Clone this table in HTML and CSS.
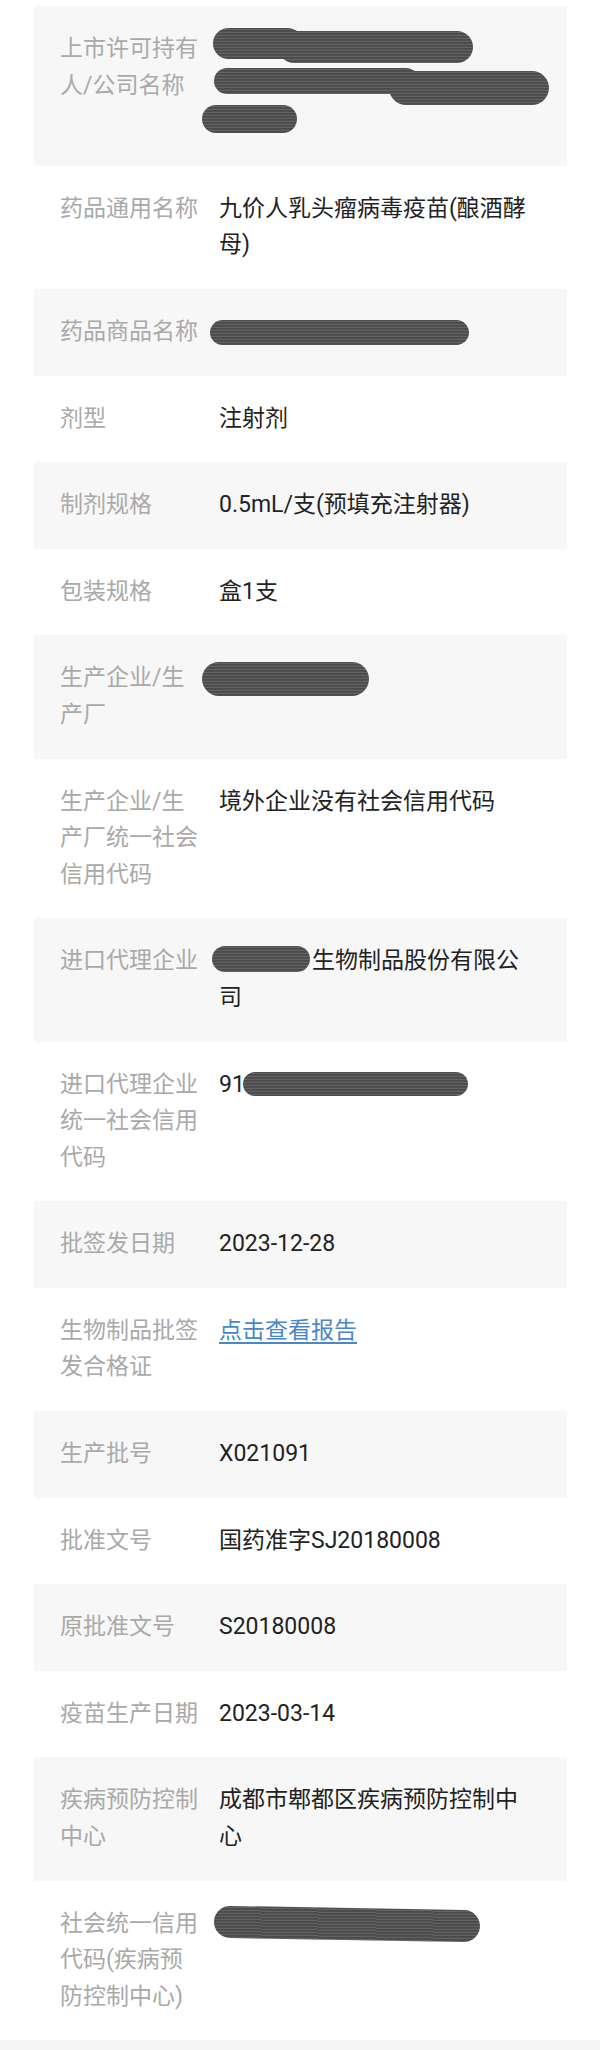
FILE: index.html
```html
<!DOCTYPE html>
<html lang="zh-CN">
<head>
<meta charset="utf-8">
<title>疫苗信息</title>
<link rel="stylesheet" href="styles.css">
</head>
<body>
<div class="list">
  <div class="row alt">
    <div class="label">上市许可持有人/公司名称</div>
    <div class="value stack3">
      <div class="scrawl s1"><span class="blob b1a"></span><span class="blob b1b"></span></div>
      <div class="scrawl s2"><span class="blob b2a"></span><span class="blob b2b"></span></div>
      <div class="scrawl s3"><span class="blob b3"></span></div>
    </div>
  </div>
  <div class="row">
    <div class="label">药品通用名称</div>
    <div class="value">九价人乳头瘤病毒疫苗(酿酒酵母)</div>
  </div>
  <div class="row alt">
    <div class="label">药品商品名称</div>
    <div class="value blob-line"><span class="blob r3"></span></div>
  </div>
  <div class="row">
    <div class="label">剂型</div>
    <div class="value">注射剂</div>
  </div>
  <div class="row alt">
    <div class="label">制剂规格</div>
    <div class="value">0.5mL/支(预填充注射器)</div>
  </div>
  <div class="row">
    <div class="label">包装规格</div>
    <div class="value">盒1支</div>
  </div>
  <div class="row alt">
    <div class="label">生产企业/生产厂</div>
    <div class="value blob-line"><span class="blob r7"></span></div>
  </div>
  <div class="row">
    <div class="label">生产企业/生产厂统一社会信用代码</div>
    <div class="value">境外企业没有社会信用代码</div>
  </div>
  <div class="row alt">
    <div class="label">进口代理企业</div>
    <div class="value"><span class="blob inline r9"></span>生物制品股份有限公司</div>
  </div>
  <div class="row">
    <div class="label">进口代理企业统一社会信用代码</div>
    <div class="value">91<span class="blob inline r10"></span></div>
  </div>
  <div class="row alt">
    <div class="label">批签发日期</div>
    <div class="value">2023-12-28</div>
  </div>
  <div class="row">
    <div class="label">生物制品批签发合格证</div>
    <div class="value"><a class="link" href="#">点击查看报告</a></div>
  </div>
  <div class="row alt">
    <div class="label">生产批号</div>
    <div class="value">X021091</div>
  </div>
  <div class="row">
    <div class="label">批准文号</div>
    <div class="value">国药准字SJ20180008</div>
  </div>
  <div class="row alt">
    <div class="label">原批准文号</div>
    <div class="value">S20180008</div>
  </div>
  <div class="row">
    <div class="label">疫苗生产日期</div>
    <div class="value">2023-03-14</div>
  </div>
  <div class="row alt">
    <div class="label">疾病预防控制中心</div>
    <div class="value">成都市郫都区疾病预防控制中心</div>
  </div>
  <div class="row">
    <div class="label">社会统一信用代码(疾病预防控制中心)</div>
    <div class="value blob-line"><span class="blob r18"></span></div>
  </div>
</div>
<div class="bottom-strip"></div>
</body>
</html>
```

FILE: styles.css
```css
:root {
  --lh: 36.6px;
}

html, body {
  margin: 0;
  padding: 0;
  background: #ffffff;
}

body {
  font-family: Roboto, "Noto Sans CJK SC", sans-serif;
  font-size: 23px;
  line-height: var(--lh);
  color: #222222;
}

.list {
  padding-top: 6px;
}

.row {
  display: grid;
  grid-template-columns: 142px 1fr;
  column-gap: 17px;
  margin: 0 33px 0 34px;
  padding: 25px 33px 25px 26px;
}

.row.alt {
  background: #f7f7f7;
}

.label {
  color: #a9a9a9;
}

.value {
  color: #222222;
}

.link {
  color: #4a87c7;
  text-decoration: underline;
  text-underline-offset: 4px;
  text-decoration-thickness: 1.5px;
}

/* redaction scribbles */
.blob {
  display: block;
  border-radius: 999px;
  background:
    repeating-linear-gradient(180deg, #4f4f4f 0 1px, #636363 1px 2px, #4a4a4a 2px 3px);
}

.blob.inline {
  display: inline-block;
}

.blob-line {
  display: flex;
  align-items: center;
  height: var(--lh);
}

.stack3 {
  height: calc(var(--lh) * 3);
}

.scrawl {
  display: flex;
  align-items: flex-start;
}

.s1 { margin-top: -3px; margin-left: -6px; }
.b1a { width: 90px; height: 31px; }
.b1b { width: 195px; height: 32px; margin-left: -25px; margin-top: 3px; }

.s2 { margin-top: 5px; margin-left: -5px; }
.b2a { width: 205px; height: 26px; }
.b2b { width: 160px; height: 34px; margin-left: -30px; margin-top: 3px; }

.s3 { margin-left: -17px; }
.b3 { width: 95px; height: 28px; }

.r3 { width: 259px; height: 25px; margin-left: -9px; }
.r7 { width: 167px; height: 34px; margin-left: -17px; }
.r9 { width: 98px; height: 26px; margin-left: -7px; margin-right: 2px; vertical-align: -4px; }
.r10 { width: 225px; height: 24px; margin-left: -2px; vertical-align: -4px; }
.r18 { width: 266px; height: 32px; margin-left: -5px; transform: rotate(1deg); }

.bottom-strip {
  height: 12px;
  background: #f5f5f5;
}
```
